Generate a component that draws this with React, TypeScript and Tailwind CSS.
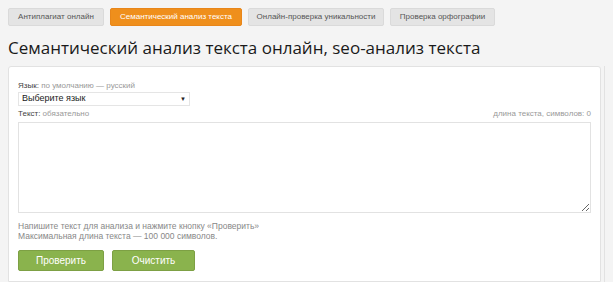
import React, { useState } from 'react';

const tabs = [
  { label: 'Антиплагиат онлайн', active: false, w: 'w-[96px]' },
  { label: 'Семантический анализ текста', active: true, w: 'w-[132px]' },
  { label: 'Онлайн-проверка уникальности', active: false, w: 'w-[136px]' },
  { label: 'Проверка орфографии', active: false, w: 'w-[105px]' },
];

export default function App() {
  const [text, setText] = useState('');

  return (
    <div className="h-[282px] overflow-hidden bg-[#f4f4f4] font-['Liberation_Sans',sans-serif] text-[#333]">
      <div className="flex gap-[6px] px-2 pt-2">
        {tabs.map((t) => (
          <div
            key={t.label}
            className={`${t.w} flex h-[18px] items-center justify-center whitespace-nowrap rounded-[2px] border text-[8px] ${
              t.active
                ? 'border-[#e8861a] bg-[#ef8f1c] text-white'
                : 'border-[#dadada] bg-[#e4e4e4] text-[#555]'
            }`}
          >
            {t.label}
          </div>
        ))}
      </div>

      <h1 className="mt-[8px] whitespace-nowrap px-2 font-['Open_Sans',sans-serif] text-[17px] leading-[28px] text-[#1a1a1a]">
        Семантический анализ текста онлайн, seo-анализ текста
      </h1>

      <div className="mx-2 mt-[4px] flex gap-[3px]">
        <div className="flex-1 rounded-t-[3px] border border-[#e2e2e2] bg-white px-[9px] pt-[13px] pb-[10px]">
          <div className="whitespace-nowrap text-[8px] leading-[11px]">
            <span className="text-[#444]">Язык:</span>{' '}
            <span className="text-[#999]">по умолчанию — русский</span>
          </div>
          <div className="mt-[1px] flex h-[14px] w-[172px] items-center justify-between border border-[#e5e5e5] px-[3px] text-[9px] text-[#222]">
            <span>Выберите язык</span>
            <span className="text-[6px]">▼</span>
          </div>

          <div className="mt-[2px] flex justify-between whitespace-nowrap text-[8px] leading-[11px]">
            <div>
              <span className="text-[#444]">Текст:</span>{' '}
              <span className="text-[#999]">обязательно</span>
            </div>
            <div className="text-[#999]">длина текста, символов: {text.length}</div>
          </div>
          <textarea
            value={text}
            onChange={(e) => setText(e.target.value)}
            className="mt-[3px] block h-[91px] w-full border border-[#e2e2e2] outline-none"
          />

          <div className="mt-[8px] whitespace-nowrap text-[8.5px] leading-[10px] text-[#888]">
            <div>Напишите текст для анализа и нажмите кнопку «Проверить»</div>
            <div>Максимальная длина текста — 100 000 символов.</div>
          </div>

          <div className="mt-[9px] flex gap-2">
            <button className="h-[21px] w-[86px] rounded-[2px] border border-[#7da044] bg-[#8ab34d] text-[10px] text-white">
              Проверить
            </button>
            <button className="h-[21px] w-[83px] rounded-[2px] border border-[#7da044] bg-[#8ab34d] text-[10px] text-white">
              Очистить
            </button>
          </div>
        </div>
        <div className="w-px bg-[#e2e2e2]" />
      </div>
    </div>
  );
}
